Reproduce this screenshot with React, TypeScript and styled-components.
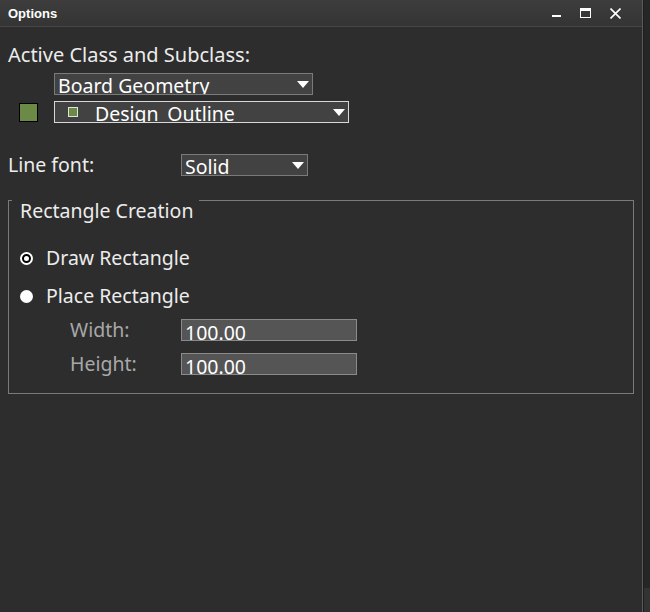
import { FC } from 'react';
import styled, { createGlobalStyle } from 'styled-components';

const GlobalStyle = createGlobalStyle`
    html, body {
        margin: 0;
        padding: 0;
        background: #2d2d2d;
    }
    * {
        box-sizing: border-box;
    }
`

const StyledApp = styled.div`
    width: 650px;
    height: 612px;
    display: flex;
    overflow: hidden;
    font-family: "Noto Sans", "Open Sans", sans-serif;
    color: #ececec;
`

const StyledWindow = styled.div`
    flex: 1;
    display: flex;
    flex-direction: column;
    background: #2d2d2d;
    border-right: 1px solid #5a5a5a;
`

const StyledEdge = styled.div`
    width: 7px;
    display: flex;
    flex-direction: column;
    justify-content: flex-end;
    background: #262626;
    border-left: 1px solid #1e1e1e;
    div {
        height: 24px;
        background: #333;
    }
`

const StyledTitleBar = styled.div`
    height: 27px;
    display: flex;
    align-items: center;
    justify-content: space-between;
    padding: 0 21px 0 8px;
    background: linear-gradient(#3d3d3d, #343434);
    border-bottom: 1px solid #474747;
    span {
        font-family: "Liberation Sans", Arial, sans-serif;
        font-weight: bold;
        font-size: 13px;
        color: #fff;
        margin-top: 1px;
    }
`

const StyledControls = styled.div`
    display: flex;
    align-items: center;
    gap: 19px;
    svg {
        display: block;
    }
`

const StyledBody = styled.div`
    padding: 16px 0 0 8px;
    display: flex;
    flex-direction: column;
`

const StyledLabel = styled.div<{ $dim?: boolean; $width?: number; $size?: number }>`
    font-size: ${props => props.$size ?? 19.5}px;
    line-height: 24px;
    white-space: nowrap;
    color: ${props => props.$dim ? '#a8a8a8' : '#ececec'};
    width: ${props => props.$width ? `${props.$width}px` : 'auto'};
    flex-shrink: 0;
`

const StyledClassRows = styled.div`
    display: grid;
    grid-template-columns: 46px auto;
    row-gap: 6px;
    margin-top: 6px;
    align-items: center;
`

const StyledSwatch = styled.div`
    width: 19px;
    height: 19px;
    margin-left: 11px;
    background: #6a8a45;
    border: 1px solid #000;
`

const StyledSelect = styled.div<{ $width: number; $focus?: boolean }>`
    position: relative;
    width: ${props => props.$width}px;
    height: 22px;
    display: flex;
    align-items: flex-start;
    gap: 10px;
    padding-left: 3px;
    background: #424242;
    border: 1px solid ${props => props.$focus ? '#d8d8d8' : '#7a7a7a'};
    overflow: hidden;
    font-size: 19.5px;
    line-height: 24px;
    color: #fff;
    white-space: nowrap;
    svg {
        position: absolute;
        right: 3px;
        top: 7px;
    }
`

const StyledItemSwatch = styled.div`
    width: 10px;
    height: 10px;
    margin: 5px 7px 0 10px;
    background: #6a8a45;
    border: 1px solid #e0e0e0;
    flex-shrink: 0;
`

const StyledRow = styled.div<{ $indent?: number; $top?: number }>`
    display: flex;
    align-items: center;
    padding-left: ${props => props.$indent ?? 0}px;
    margin-top: ${props => props.$top ?? 0}px;
`

const StyledGroup = styled.fieldset`
    margin: 1px 8px 0 0;
    padding: 0 0 17px 0;
    border: 1px solid #7a7a7a;
    display: flex;
    flex-direction: column;
    legend {
        margin-left: 3px;
        padding: 22px 6px 0 8px;
        font-size: 19.5px;
        line-height: 22px;
        color: #ececec;
    }
`

const StyledRadio = styled.div<{ $checked?: boolean }>`
    width: 13px;
    height: 13px;
    margin: 1px 13px 0 11px;
    border-radius: 50%;
    background: #fff;
    position: relative;
    &:after {
        content: '';
        display: ${props => props.$checked ? 'block' : 'none'};
        position: absolute;
        inset: 2px;
        border-radius: 50%;
        border: 2px solid #000;
        background: #fff;
    }
`

const StyledInput = styled.div`
    width: 176px;
    height: 22px;
    padding-left: 3px;
    background: #555555;
    border: 1px solid #8a8a8a;
    overflow: hidden;
    font-size: 19.5px;
    line-height: 25px;
    color: #fff;
`

const Arrow: FC = () => (
    <svg width="12" height="8" viewBox="0 0 12 8">
        <polygon points="0,0 12,0 6,7" fill="#fff" />
    </svg>
)

const App: FC = () => {
    return (
        <StyledApp>
            <GlobalStyle />
            <StyledWindow>
                <StyledTitleBar>
                    <span>Options</span>
                    <StyledControls>
                        <svg width="9" height="10" viewBox="0 0 9 10">
                            <rect x="0" y="7" width="9" height="2" fill="#fff" />
                        </svg>
                        <svg width="11" height="11" viewBox="0 0 11 11">
                            <rect x="0.5" y="0.5" width="10" height="9" fill="none" stroke="#fff" />
                            <rect x="0" y="0" width="11" height="3" fill="#fff" />
                        </svg>
                        <svg width="11" height="11" viewBox="0 0 11 11">
                            <path d="M0.5 0.5 L10.5 10.5 M10.5 0.5 L0.5 10.5" stroke="#fff" strokeWidth="1.6" />
                        </svg>
                    </StyledControls>
                </StyledTitleBar>
                <StyledBody>
                    <StyledLabel $size={20}>Active Class and Subclass:</StyledLabel>
                    <StyledClassRows>
                        <div />
                        <StyledSelect $width={259}>
                            Board Geometry
                            <Arrow />
                        </StyledSelect>
                        <StyledSwatch />
                        <StyledSelect $width={295} $focus>
                            <StyledItemSwatch />
                            Design_Outline
                            <Arrow />
                        </StyledSelect>
                    </StyledClassRows>
                    <StyledRow $top={30}>
                        <StyledLabel $width={173}>Line font:</StyledLabel>
                        <StyledSelect $width={127}>
                            Solid
                            <Arrow />
                        </StyledSelect>
                    </StyledRow>
                    <StyledGroup>
                        <legend>Rectangle Creation</legend>
                        <StyledRow $top={24}>
                            <StyledRadio $checked />
                            <StyledLabel>Draw Rectangle</StyledLabel>
                        </StyledRow>
                        <StyledRow $top={14}>
                            <StyledRadio />
                            <StyledLabel>Place Rectangle</StyledLabel>
                        </StyledRow>
                        <StyledRow $indent={61} $top={10}>
                            <StyledLabel $dim $width={111}>Width:</StyledLabel>
                            <StyledInput>100.00</StyledInput>
                        </StyledRow>
                        <StyledRow $indent={61} $top={10}>
                            <StyledLabel $dim $width={111}>Height:</StyledLabel>
                            <StyledInput>100.00</StyledInput>
                        </StyledRow>
                    </StyledGroup>
                </StyledBody>
            </StyledWindow>
            <StyledEdge>
                <div />
            </StyledEdge>
        </StyledApp>
    )
}

export default App;
